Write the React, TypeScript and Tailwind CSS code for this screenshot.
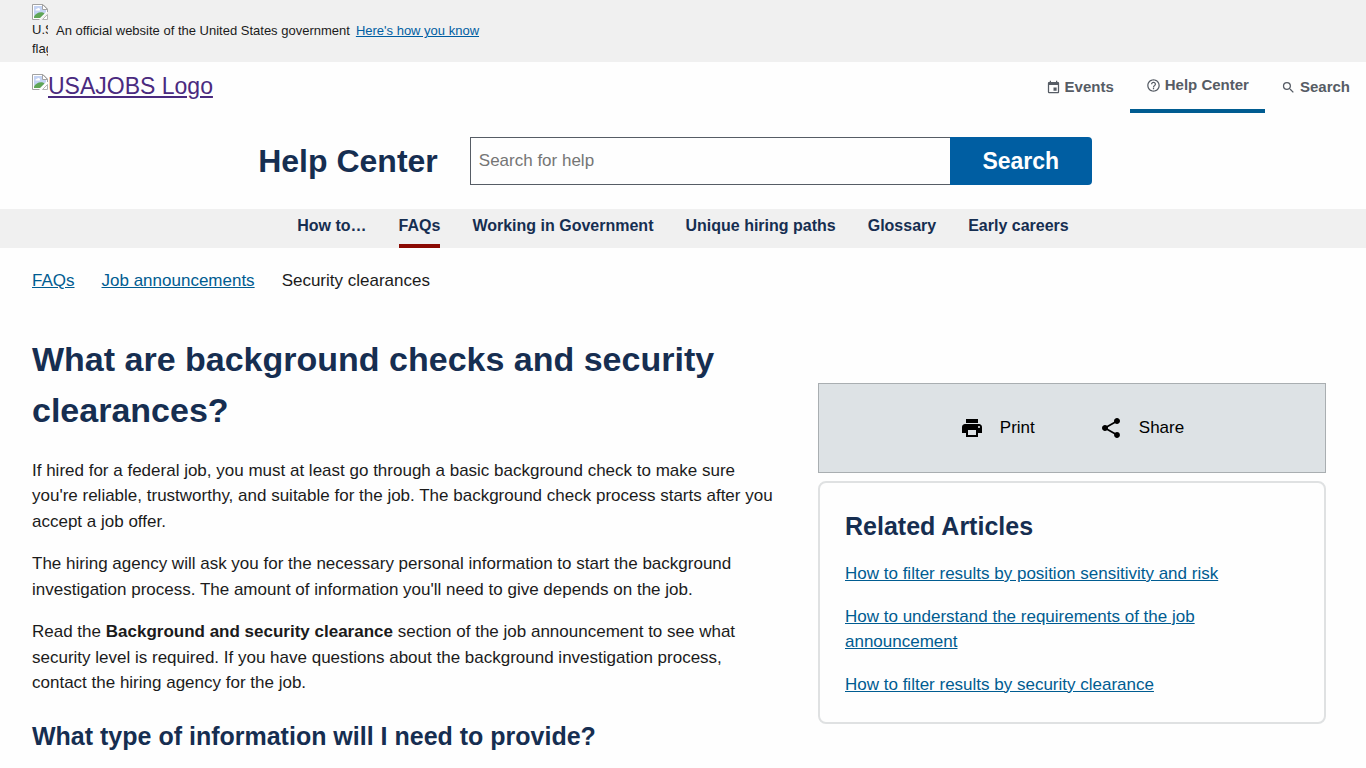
import { MdEvent, MdHelpOutline, MdPrint, MdSearch, MdShare } from "react-icons/md"

const siteLinks = [
    { label: "Events", icon: MdEvent, active: false },
    { label: "Help Center", icon: MdHelpOutline, active: true },
    { label: "Search", icon: MdSearch, active: false },
]

const helpLinks = [
    { label: "How to…", active: false },
    { label: "FAQs", active: true },
    { label: "Working in Government", active: false },
    { label: "Unique hiring paths", active: false },
    { label: "Glossary", active: false },
    { label: "Early careers", active: false },
]

const related = [
    "How to filter results by position sensitivity and risk",
    "How to understand the requirements of the job announcement",
    "How to filter results by security clearance",
]

function MissingImage() {
    return (
        <svg viewBox="0 0 16 16" className="size-4 shrink-0" aria-hidden="true">
            <path d="M0.5 0.5H11L15.5 5V8L8 15.5H0.5Z" fill="#fff" />
            <path d="M2 2H10.5V5.5H14V8L8 14H2Z" fill="#c4d3f3" />
            <path d="M3.5 6.5a1.5 1.5 0 0 1 1.6-1.8 1.6 1.6 0 0 1 2.7 1.8Z" fill="#fff" />
            <path d="M2 14V12.5C4 9.5 7 7.5 11 8.5L12.5 9.5L8 14Z" fill="#5fa656" />
            <path d="M15.5 8V5L11 0.5H0.5V15.5H7.5" fill="none" stroke="#a3a3a3" />
            <path d="M10.5 0.5V5.5H15.5Z" fill="#fff" stroke="#a3a3a3" />
            <path d="M15.5 10.5V15.5H10.5Z" fill="#fff" stroke="#b5b5b5" />
        </svg>
    )
}

function Banner() {
    return (
        <section className="flex h-[62px] items-center bg-[#f0f0f0] px-8 text-[13px]">
            <div className="mr-2 flex w-4 flex-col overflow-hidden leading-[19px]">
                <MissingImage />
                <span>U.S.</span>
                <span>flag</span>
            </div>
            <p>
                An official website of the United States government
                <a href="#" className="ml-1.5 text-[#005ea2] underline">Here's how you know</a>
            </p>
        </section>
    )
}

function Header() {
    return (
        <header className="flex items-start justify-between pl-8">
            <a href="#" className="flex items-start pt-3 text-[23px] leading-6 text-[#4a2a7f]">
                <MissingImage />
                <span className="underline">USAJOBS Logo</span>
            </a>
            <nav className="flex text-[15px] font-bold text-[#565c65]">
                {siteLinks.map(({ label, icon: Icon, active }) => (
                    <a
                        key={label}
                        href="#"
                        className={
                            active
                                ? "flex h-[51px] items-center gap-1 border-b-4 border-[#005c91] px-4"
                                : "flex h-[51px] items-center gap-1 px-4"
                        }
                    >
                        <Icon className="size-[15px]" />
                        {label}
                    </a>
                ))}
            </nav>
        </header>
    )
}

function HelpSearch() {
    return (
        <div className="flex items-center justify-center gap-8 pt-6 pr-4 pb-6">
            <h2 className="text-[32px] font-bold text-[#162e51]">Help Center</h2>
            <form className="flex h-12" onSubmit={(e) => e.preventDefault()}>
                <input
                    type="search"
                    aria-label="Search for help"
                    placeholder="Search for help"
                    className="w-[480px] border border-r-0 border-[#565c65] px-2 placeholder:text-[#757575]"
                />
                <button type="submit" className="w-[142px] rounded-r bg-[#005ea2] text-[23px] font-bold text-white">
                    Search
                </button>
            </form>
        </div>
    )
}

function HelpNav() {
    return (
        <nav className="flex justify-center gap-8 bg-[#f0f0f0] text-base font-bold text-[#162e51]">
            {helpLinks.map(({ label, active }) => (
                <a
                    key={label}
                    href="#"
                    className={active ? "h-[39px] border-b-4 border-[#8b0a03] pt-[5px]" : "h-[39px] pt-[5px]"}
                >
                    {label}
                </a>
            ))}
        </nav>
    )
}

function Breadcrumbs() {
    return (
        <nav aria-label="Breadcrumbs" className="flex gap-[27px] px-8 pt-5">
            <a href="#" className="text-[#005c91] underline">FAQs</a>
            <a href="#" className="text-[#005c91] underline">Job announcements</a>
            <span>Security clearances</span>
        </nav>
    )
}

function Article() {
    return (
        <article className="pr-4">
            <h1 className="mb-[22px] text-[34px] leading-normal font-bold text-[#162e51]">
                What are background checks and security clearances?
            </h1>
            <div className="space-y-[17px]">
                <p>
                    If hired for a federal job, you must at least go through a basic background check to make sure
                    you're reliable, trustworthy, and suitable for the job. The background check process starts after
                    you accept a job offer.
                </p>
                <p>
                    The hiring agency will ask you for the necessary personal information to start the background
                    investigation process. The amount of information you'll need to give depends on the job.
                </p>
                <p>
                    Read the <strong>Background and security clearance</strong> section of the job announcement to see
                    what security level is required. If you have questions about the background investigation process,
                    contact the hiring agency for the job.
                </p>
            </div>
            <h2 className="mt-[22px] text-[25px] leading-normal font-bold text-[#162e51]">
                What type of information will I need to provide?
            </h2>
        </article>
    )
}

function Sidebar() {
    return (
        <aside className="flex flex-col gap-2 pt-[49px]">
            <div className="flex h-[90px] items-center justify-center gap-16 border border-[#a9aeb1] bg-[#dde2e5] text-black">
                <button type="button" className="flex items-center gap-4">
                    <MdPrint className="size-6" />
                    Print
                </button>
                <button type="button" className="flex items-center gap-4">
                    <MdShare className="size-6" />
                    Share
                </button>
            </div>
            <section className="rounded-lg border-2 border-[#dfe1e2] p-[25px]">
                <h2 className="mb-4 text-[25px] leading-normal font-bold text-[#162e51]">Related Articles</h2>
                <ul className="space-y-[17px]">
                    {related.map((title) => (
                        <li key={title}>
                            <a href="#" className="text-[#005c91] underline">{title}</a>
                        </li>
                    ))}
                </ul>
            </section>
        </aside>
    )
}

export default function App() {
    return (
        <div className="min-h-screen bg-[#fefefe] font-['Liberation_Sans',Arial,sans-serif] text-[17px] leading-normal text-[#1b1b1b]">
            <Banner />
            <Header />
            <HelpSearch />
            <HelpNav />
            <Breadcrumbs />
            <main className="grid grid-cols-[3fr_2fr] items-start gap-6 pt-10 pr-10 pl-8">
                <Article />
                <Sidebar />
            </main>
        </div>
    )
}
